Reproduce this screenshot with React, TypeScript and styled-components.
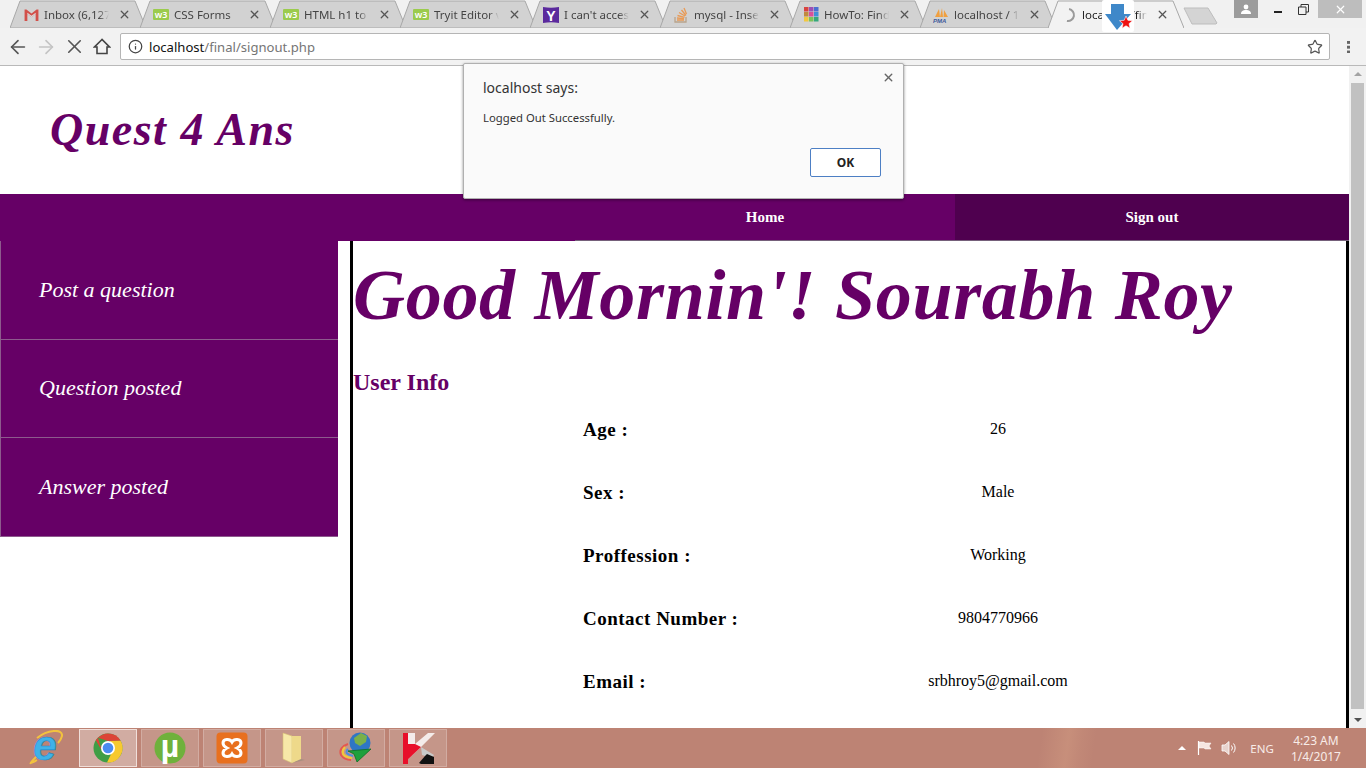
import React from 'react'
import styled, { createGlobalStyle } from 'styled-components'
import { ArrowLeft, ArrowRight, X, Info, Star } from 'lucide-react'

const UI_FONT = `'Noto Sans', 'Open Sans', sans-serif`
const PAGE_FONT = `'Liberation Serif', 'Times New Roman', serif`
const PURPLE = '#660066'

const GlobalStyle = createGlobalStyle`
  html, body {
    margin: 0;
    padding: 0;
    height: 100%;
    overflow: hidden;
    background: #fff;
  }
  * {
    box-sizing: border-box;
  }
`

const Screen = styled.div`
  width: 1366px;
  height: 768px;
  display: flex;
  flex-direction: column;
  position: relative;
  overflow: hidden;
`

/* ---------- tab strip ---------- */

const TabStrip = styled.div`
  height: 28px;
  flex: none;
  display: flex;
  align-items: flex-start;
  padding-left: 10px;
  background: #f1f1f1;
  position: relative;
`

const TabShape = styled.svg`
  position: absolute;
  inset: 0;
  width: 100%;
  height: 100%;
`

const TabItem = styled.div<{ $active?: boolean }>`
  position: relative;
  width: 136px;
  height: 28px;
  margin-right: -6px;
  margin-left: ${({ $active }) => ($active ? -2 : 0)}px;
  flex: none;
  display: flex;
  align-items: center;
  padding: 1px 15px 0 13px;
  gap: 5px;
  z-index: ${({ $active }) => ($active ? 2 : 1)};
  font: 11.5px ${UI_FONT};
  color: ${({ $active }) => ($active ? '#222' : '#444')};
`

const TabFavicon = styled.span`
  position: relative;
  width: 16px;
  height: 16px;
  flex: none;
  display: flex;
  align-items: center;
  justify-content: center;
`

const TabTitle = styled.span`
  position: relative;
  flex: 1;
  min-width: 0;
  overflow: hidden;
  white-space: nowrap;
  -webkit-mask-image: linear-gradient(to right, #000 84%, transparent 100%);
  mask-image: linear-gradient(to right, #000 84%, transparent 100%);
`

const TabClose = styled(X)`
  position: relative;
  flex: none;
  margin-left: 4px;
  color: #555;
`

const NewTab = styled.svg`
  width: 36px;
  height: 18px;
  margin: 7px 0 0 5px;
  flex: none;
  position: relative;
  z-index: 0;
`

const WindowControls = styled.div`
  margin-left: auto;
  display: flex;
  height: 18px;
  align-items: stretch;
  padding-right: 4px;
`

const ProfileButton = styled.div`
  width: 24px;
  background: #9c9c9c;
  display: flex;
  align-items: center;
  justify-content: center;
`

const ControlButton = styled.div<{ $width: number }>`
  width: ${({ $width }) => $width}px;
  display: flex;
  align-items: center;
  justify-content: center;
`

const RestoreGlyph = styled.svg`
  width: 11px;
  height: 11px;
  flex: none;
`

const CloseButton = styled.div`
  width: 44px;
  margin-left: 10px;
  background: #bdbdbd;
  display: flex;
  align-items: center;
  justify-content: center;
`

const DownloadBadge = styled.div`
  position: absolute;
  left: 1102px;
  top: 0;
  width: 32px;
  height: 32px;
  background: #fff;
  border-radius: 2px;
  z-index: 5;
`

/* ---------- toolbar ---------- */

const Toolbar = styled.div`
  height: 38px;
  flex: none;
  background: #f2f2f2;
  border-bottom: 1px solid #b9b9b9;
  display: flex;
  align-items: center;
  padding: 0 0 0 4px;
`

const NavButton = styled.div<{ $disabled?: boolean }>`
  width: 28px;
  height: 24px;
  display: flex;
  align-items: center;
  justify-content: center;
  color: ${({ $disabled }) => ($disabled ? '#c4c4c4' : '#555')};
`

const Omnibox = styled.div`
  width: 1210px;
  height: 27px;
  margin-left: 4px;
  background: #fff;
  border: 1px solid #b5b5b5;
  border-radius: 2px;
  display: flex;
  align-items: center;
  padding: 0 6px 0 7px;
  font: 13.1px ${UI_FONT};
  color: #757575;
`

const UrlHost = styled.span`
  color: #111;
`

const UrlText = styled.span`
  margin-left: 6px;
`

const BookmarkStar = styled(Star)`
  margin-left: auto;
  color: #555;
`

const MenuDots = styled.div`
  width: 3px;
  height: 13px;
  margin-left: 17px;
  background: radial-gradient(circle at center, #666 1.6px, transparent 1.8px) 0 0 / 3px 4.8px repeat-y;
`

/* ---------- page ---------- */

const Viewport = styled.div`
  flex: 1;
  min-height: 0;
  display: flex;
  overflow: hidden;
`

const Page = styled.div`
  width: 1349px;
  flex: none;
  display: flex;
  flex-direction: column;
  font-family: ${PAGE_FONT};
`

const Masthead = styled.header`
  height: 128px;
  flex: none;
  display: flex;
  align-items: center;
  padding: 0 0 2px 50px;
`

const SiteTitle = styled.h1`
  margin: 0;
  color: ${PURPLE};
  font: italic bold 46px ${PAGE_FONT};
  letter-spacing: 1.5px;
`

const NavBar = styled.nav`
  height: 47px;
  flex: none;
  display: flex;
  background: ${PURPLE};
  padding-left: 575px;
`

const NavLink = styled.div<{ $current?: boolean }>`
  width: ${({ $current }) => ($current ? 394 : 380)}px;
  display: flex;
  align-items: center;
  justify-content: center;
  color: #fff;
  font: bold 15px ${PAGE_FONT};
  background: ${({ $current }) => ($current ? '#4f004f' : PURPLE)};
  border-bottom: 1px solid #75607a;
`

const Content = styled.div`
  flex: 1;
  min-height: 0;
  display: grid;
  grid-template-columns: 338px 1fr;
  column-gap: 12px;
`

const Sidebar = styled.aside`
  display: flex;
  flex-direction: column;
`

const SideItem = styled.div`
  height: 98.5px;
  display: flex;
  align-items: center;
  padding-left: 38px;
  background: ${PURPLE};
  border-bottom: 1px solid #8d5a8d;
  border-left: 1px solid #8d5a8d;
  color: #fff;
  font: italic 22px ${PAGE_FONT};
`

const Main = styled.main`
  border-left: 3px solid #000;
  border-right: 3px solid #000;
  min-width: 0;
`

const Greeting = styled.h1`
  margin: 14px 0 0;
  color: ${PURPLE};
  font: italic bold 72px/80px ${PAGE_FONT};
  letter-spacing: 0.7px;
  white-space: nowrap;
`

const SectionTitle = styled.h2`
  margin: 32px 0 0;
  color: ${PURPLE};
  font: bold 24px/30px ${PAGE_FONT};
`

const InfoTable = styled.div`
  margin: 18px 0 0 230px;
  display: grid;
  grid-template-columns: 310px 210px;
  grid-auto-rows: 63px;
`

const InfoLabel = styled.div`
  font: bold 19px/30px ${PAGE_FONT};
  letter-spacing: 0.5px;
  color: #000;
`

const InfoValue = styled.div`
  font: 16px/28px ${PAGE_FONT};
  text-align: center;
  color: #000;
`

const Scrollbar = styled.div`
  width: 17px;
  flex: none;
  background: #f1f1f1;
  display: flex;
  flex-direction: column;
  align-items: center;
`

const ScrollArrow = styled.div<{ $down?: boolean }>`
  width: 0;
  height: 0;
  flex: none;
  margin: ${({ $down }) => ($down ? '0 0 6px' : '6px 0 0')};
  border-left: 4px solid transparent;
  border-right: 4px solid transparent;
  border-bottom: ${({ $down }) => ($down ? '0' : '4px solid #a3a3a3')};
  border-top: ${({ $down }) => ($down ? '4px solid #505050' : '0')};
`

const ScrollThumb = styled.div`
  width: 13px;
  height: 626px;
  margin-top: 7px;
  margin-bottom: auto;
  background: #c1c1c1;
`

/* ---------- alert dialog ---------- */

const Dialog = styled.div`
  position: absolute;
  left: 463px;
  top: 63px;
  width: 441px;
  height: 136px;
  background: #fafafa;
  border: 1px solid #b0b0b0;
  border-radius: 2px;
  box-shadow: 0 1px 3px rgba(0, 0, 0, 0.45);
  padding: 14px 22px 0 19px;
  font-family: ${UI_FONT};
  z-index: 6;
`

const DialogClose = styled(X)`
  position: absolute;
  top: 7px;
  right: 8px;
  color: #666;
`

const DialogTitle = styled.div`
  font-size: 14px;
  line-height: 20px;
  color: #333;
`

const DialogMessage = styled.div`
  margin-top: 12px;
  font-size: 11.3px;
  line-height: 16px;
  color: #333;
`

const DialogActions = styled.div`
  display: flex;
  justify-content: flex-end;
  margin-top: 22px;
`

const OkButton = styled.button`
  width: 71px;
  height: 29px;
  background: #fff;
  border: 1px solid #4d7fc4;
  border-radius: 2px;
  font: bold 12px ${UI_FONT};
  color: #222;
  padding: 0;
`

/* ---------- taskbar ---------- */

const Taskbar = styled.footer`
  height: 40px;
  flex: none;
  display: flex;
  align-items: center;
  background:
    linear-gradient(98deg, transparent 76%, rgba(240, 190, 150, 0.2) 78%, rgba(240, 190, 150, 0.08) 79%, transparent 80%),
    #bd8374;
  padding-left: 17px;
  font-family: ${UI_FONT};
  color: #fff;
`

const TaskButton = styled.div<{ $active?: boolean; $plain?: boolean }>`
  width: 58px;
  height: 38px;
  margin-right: 4px;
  flex: none;
  display: flex;
  align-items: center;
  justify-content: center;
  background: ${({ $active, $plain }) =>
    $plain ? 'transparent' : $active ? '#d1aca2' : '#c59689'};
  border: 1px solid ${({ $active, $plain }) =>
    $plain ? 'transparent' : $active ? '#f0dfda' : '#d2aca2'};
`

const Tray = styled.div`
  margin-left: auto;
  display: flex;
  align-items: center;
  height: 100%;
  padding-right: 25px;
`

const TrayIcons = styled.div`
  display: flex;
  align-items: center;
  gap: 8px;
  margin-right: 11px;
`

const TrayLang = styled.div`
  font-size: 11.5px;
  margin-right: 17px;
  color: #f8ece8;
`

const TrayClock = styled.div`
  font-size: 12px;
  line-height: 16px;
  padding-top: 2px;
  text-align: center;
  color: #f8ece8;
`

const TrayCaret = styled.div`
  width: 0;
  height: 0;
  margin-right: 3px;
  border-left: 4px solid transparent;
  border-right: 4px solid transparent;
  border-bottom: 4px solid #fff;
`

/* ---------- favicons and logos ---------- */

const GmailIcon = () => (
  <svg width="15" height="12" viewBox="0 0 16 13">
    <path d="M0.500 0.500h2L8 5l5.500-4.500h2V13h-3V5.500L8 9 3.500 5.500V13h-3z" fill="#d2504a" />
    <path d="M3.500 5.500L8 9l4.500-3.500V4L8 7.400 3.500 4z" fill="#ddd" />
  </svg>
)

const W3Mark = styled.span`
  width: 16px;
  height: 11px;
  background: #9bcb4c;
  color: #fff;
  font: 600 9px/11px ${UI_FONT};
  text-align: center;
  border-radius: 1px;
`

const YahooIcon = () => (
  <svg width="16" height="16" viewBox="0 0 16 16">
    <path d="M0 0q8 1.500 16 0v16q-8-1.500-16 0z" fill="#5b2a9d" />
    <text x="8" y="13.500" textAnchor="middle" fontSize="14" fontWeight="bold" fill="#fff" fontFamily="Liberation Sans">
      Y
    </text>
  </svg>
)

const StackIcon = () => (
  <svg width="14" height="16" viewBox="0 0 14 16" fill="none" stroke="#e99a55" strokeWidth="1.300">
    <path d="M1 10v5h11v-5" stroke="#b9a48c" />
    <path d="M3 13h7M3 11l7 .6M3.500 8.500l7 1.800M5 5.500l6 3.500M7.500 3l4.500 5.500M10 1l2.500 6" />
  </svg>
)

const GridIcon = () => {
  const colors = ['#d8433f', '#9b4fb5', '#4a6fd0', '#c08a3e', '#d84f9a', '#3f8fd8', '#f2c83e', '#7bc25a', '#35a87c']
  return (
    <svg width="15" height="15" viewBox="0 0 15 15">
      {colors.map((c, i) => (
        <rect key={c} x={(i % 3) * 5} y={Math.floor(i / 3) * 5} width="4.500" height="4.500" fill={c} />
      ))}
    </svg>
  )
}

const PmaIcon = () => (
  <svg width="16" height="16" viewBox="0 0 16 16">
    <path d="M2 10L6 2l1 8zM7 10l2-9 1 9zM10.500 10L11 3l4 7z" fill="#f0a040" />
    <text x="0" y="15.500" fontSize="6" fontStyle="italic" fontWeight="bold" fill="#3f5a9c" fontFamily="Liberation Sans">
      PMA
    </text>
  </svg>
)

const SpinnerSvg = styled.svg`
  margin-left: -3px;
`

const Spinner = () => (
  <SpinnerSvg width="16" height="16" viewBox="0 0 16 16" fill="none">
    <path d="M8 2a6 6 0 0 1 0 12" stroke="#9a9a9a" strokeWidth="2" transform="rotate(10 8 8)" />
  </SpinnerSvg>
)

const ChromeIcon = () => (
  <svg width="30" height="30" viewBox="0 0 30 30">
    <circle cx="15" cy="15" r="14.500" fill="#3f9e45" />
    <path d="M15 .5a14.500 14.500 0 0 1 12.600 7.300L15 8 5 4.800A14.500 14.500 0 0 1 15 .5z" fill="#dc4437" />
    <path d="M2.800 7.200L9 18 5 4.800z" fill="#dc4437" />
    <path d="M27.600 7.800A14.500 14.500 0 0 1 14 29.500L21 15l-4-7z" fill="#f7c92f" />
    <circle cx="15" cy="15" r="7" fill="#fff" />
    <circle cx="15" cy="15" r="5.300" fill="#4a8cf0" />
  </svg>
)

const IeIcon = () => (
  <svg width="34" height="36" viewBox="0 0 34 36">
    <text x="16" y="30" textAnchor="middle" fontSize="42" fontWeight="bold" fontStyle="italic" fill="#3fb2e8" stroke="#1f86c8" strokeWidth="0.600" fontFamily="Liberation Sans">
      e
    </text>
    <path d="M7 27C-2 36 1 34 8 30M8 8c10-8 26-10 25-2-.5 2-2 5-4 7" fill="none" stroke="#f2c23e" strokeWidth="2" />
  </svg>
)

const TorrentIcon = () => (
  <svg width="32" height="32" viewBox="0 0 32 32">
    <circle cx="16" cy="16" r="15.500" fill="#6fb13c" />
    <text x="16" y="25" textAnchor="middle" fontSize="32" fontWeight="bold" fill="#fff" fontFamily="Liberation Sans">
      µ
    </text>
  </svg>
)

const XamppIcon = () => (
  <svg width="32" height="32" viewBox="0 0 32 32">
    <rect x="0.500" y="0.500" width="31" height="31" rx="4" fill="#e8701f" />
    <path
      d="M16 10C14 6.500 7 6.500 7 11c0 2.500 2 4 4 5-2 1-4 2.500-4 5 0 4.500 7 4.500 9 1 2 3.500 9 3.500 9-1 0-2.500-2-4-4-5 2-1 4-2.500 4-5 0-4.500-7-4.500-9-1z"
      fill="none"
      stroke="#fff"
      strokeWidth="3"
    />
  </svg>
)

const FolderIcon = () => (
  <svg width="24" height="32" viewBox="0 0 24 32">
    <path d="M1 1l9 3v27l-9-4z" fill="#f7e8a8" stroke="#d6bf72" strokeWidth="0.600" />
    <path d="M10 4h9v24l-9 3z" fill="#eed98a" />
    <path d="M10 31l13-3-4-1z" fill="#a98f7f" />
  </svg>
)

const IdmIcon = () => (
  <svg width="34" height="32" viewBox="0 0 34 32">
    <path d="M9 12C3 14 0 18 2 23c2 3 6 5 10 5" fill="none" stroke="#e4574f" strokeWidth="2" />
    <path d="M6 15C3 18 3 22 6 24c2 1 5 2 7 2" fill="none" stroke="#f1c83a" strokeWidth="2.200" />
    <path d="M9 17c-2 2-2 4 0 5 1 1 3 1 5 2" fill="none" stroke="#4a8fe0" strokeWidth="2" />
    <circle cx="21" cy="11" r="10.500" fill="#2f76c4" />
    <path d="M15 6l7-5 6 3-1 6-6 4-5-3z" fill="#7ab04a" />
    <path d="M32 17L9 19l6 3 3 8z" fill="#1ea03c" stroke="#0d6e25" strokeWidth="0.800" />
  </svg>
)

const KasperskyIcon = () => (
  <svg width="33" height="33" viewBox="0 0 33 33">
    <path d="M1 1h12v11L26 1h7L19 15 1 32z" fill="#f4ecea" />
    <path d="M1 12l12 0 6 3L1 32z" fill="#e8102a" />
    <path d="M1 1h5v31H1z" fill="#e8102a" />
    <path d="M19 15l13 8-2 3-10-3z" fill="#c9c9c9" />
    <path d="M17 31l6-7 2-2 7 3v7H19z" fill="#111" />
  </svg>
)

const HomeGlyph = () => (
  <svg width="18" height="17" viewBox="0 0 18 17" fill="none" stroke="#444" strokeWidth="1.600">
    <path d="M9 1.500L1.500 9H4v6.500h10V9h2.500z" />
  </svg>
)

const DownloadArrow = () => (
  <svg width="32" height="32" viewBox="0 0 32 32">
    <path d="M9 4h13v10h7L15 30 3 14h6z" fill="#3f88c9" />
    <path d="M24 16l1.900 4.300 4.600.4-3.500 3 1.100 4.500-4.100-2.400-4 2.400 1-4.500-3.500-3 4.700-.4z" fill="#ee1111" stroke="#fff" strokeWidth="0.600" />
  </svg>
)

const TrayFlag = () => (
  <svg width="16" height="16" viewBox="0 0 16 16" fill="none" stroke="#fff">
    <path d="M1.500 1v14" strokeWidth="1.200" />
    <path d="M2 2h5l1 1h6l-2 3 2 3H8L7 8H2z" fill="#f6e6e1" strokeWidth="0.500" />
  </svg>
)

const TraySpeaker = () => (
  <svg width="18" height="16" viewBox="0 0 18 16" fill="none" stroke="#fff">
    <path d="M1 5h3l4-3.500v13L4 11H1z" fill="#e8d3cd" strokeWidth="0.800" />
    <path d="M10.500 5.500a4 4 0 0 1 0 5M12.500 3.500a7 7 0 0 1 0 9" strokeWidth="1" />
  </svg>
)

/* ---------- data ---------- */

const tabs: { title: string; icon: React.ReactNode; active?: boolean }[] = [
  { title: 'Inbox (6,127)', icon: <GmailIcon /> },
  { title: 'CSS Forms', icon: <W3Mark>w3</W3Mark> },
  { title: 'HTML h1 to h6', icon: <W3Mark>w3</W3Mark> },
  { title: 'Tryit Editor v3', icon: <W3Mark>w3</W3Mark> },
  { title: "I can't access", icon: <YahooIcon /> },
  { title: 'mysql - Insert', icon: <StackIcon /> },
  { title: 'HowTo: Find', icon: <GridIcon /> },
  { title: 'localhost / 127', icon: <PmaIcon /> },
  { title: 'localhost/final', icon: <Spinner />, active: true },
]

const sideItems = ['Post a question', 'Question posted', 'Answer posted']

const userInfo = [
  ['Age :', '26'],
  ['Sex :', 'Male'],
  ['Proffession :', 'Working'],
  ['Contact Number :', '9804770966'],
  ['Email :', 'srbhroy5@gmail.com'],
]

const taskIcons: { icon: React.ReactNode; active?: boolean; plain?: boolean }[] = [
  { icon: <IeIcon />, plain: true },
  { icon: <ChromeIcon />, active: true },
  { icon: <TorrentIcon /> },
  { icon: <XamppIcon /> },
  { icon: <FolderIcon /> },
  { icon: <IdmIcon /> },
  { icon: <KasperskyIcon /> },
]

export default function App() {
  return (
    <Screen>
      <GlobalStyle />
      <TabStrip>
        {tabs.map((tab) => (
          <TabItem key={tab.title} $active={tab.active}>
            <TabShape viewBox="0 0 136 28" preserveAspectRatio="none">
              <path
                d="M0 28L10 1h115l11 27z"
                fill={tab.active ? '#f2f2f2' : '#d2d2d2'}
                stroke="#a8a8a8"
              />
              {tab.active && <path d="M1 28h134" stroke="#f2f2f2" strokeWidth="2" />}
            </TabShape>
            <TabFavicon>{tab.icon}</TabFavicon>
            <TabTitle>{tab.title}</TabTitle>
            <TabClose size={13} strokeWidth={2.4} />
          </TabItem>
        ))}
        <NewTab viewBox="0 0 36 18">
          <path d="M1 1h24l9 15-1 1H9z" fill="#d4d4d4" stroke="#bdbdbd" />
        </NewTab>
        <WindowControls>
          <ProfileButton>
            <svg width="10" height="10" viewBox="0 0 10 10">
              <circle cx="5" cy="3" r="2.400" fill="#fff" />
              <path d="M0 10c0-3 2-4 5-4s5 1 5 4z" fill="#fff" />
            </svg>
          </ProfileButton>
          <ControlButton $width={40}>
            <svg width="10" height="10" viewBox="0 0 10 10">
              <path d="M1 7h8v2H1z" fill="#222" />
            </svg>
          </ControlButton>
          <ControlButton $width={10}>
            <RestoreGlyph viewBox="0 0 11 11" fill="none" stroke="#333">
              <path d="M.500 3h7.500v7.500H.500zM3 3V.500h7.500V8H8" />
            </RestoreGlyph>
          </ControlButton>
          <CloseButton>
            <X size={13} color="#fff" strokeWidth={2.2} />
          </CloseButton>
        </WindowControls>
      </TabStrip>
      <DownloadBadge>
        <DownloadArrow />
      </DownloadBadge>
      <Toolbar>
        <NavButton>
          <ArrowLeft size={22} strokeWidth={1.8} />
        </NavButton>
        <NavButton $disabled>
          <ArrowRight size={22} strokeWidth={1.8} />
        </NavButton>
        <NavButton>
          <X size={23} strokeWidth={1.7} />
        </NavButton>
        <NavButton>
          <HomeGlyph />
        </NavButton>
        <Omnibox>
          <Info size={15} color="#444" strokeWidth={2} />
          <UrlText>
            <UrlHost>localhost</UrlHost>/final/signout.php
          </UrlText>
          <BookmarkStar size={16} strokeWidth={1.8} />
        </Omnibox>
        <MenuDots />
      </Toolbar>
      <Viewport>
        <Page>
          <Masthead>
            <SiteTitle>Quest 4 Ans</SiteTitle>
          </Masthead>
          <NavBar>
            <NavLink>Home</NavLink>
            <NavLink $current>Sign out</NavLink>
          </NavBar>
          <Content>
            <Sidebar>
              {sideItems.map((item) => (
                <SideItem key={item}>{item}</SideItem>
              ))}
            </Sidebar>
            <Main>
              <Greeting>Good Mornin'! Sourabh Roy</Greeting>
              <SectionTitle>User Info</SectionTitle>
              <InfoTable>
                {userInfo.map(([label, value]) => (
                  <React.Fragment key={label}>
                    <InfoLabel>{label}</InfoLabel>
                    <InfoValue>{value}</InfoValue>
                  </React.Fragment>
                ))}
              </InfoTable>
            </Main>
          </Content>
        </Page>
        <Scrollbar>
          <ScrollArrow />
          <ScrollThumb />
          <ScrollArrow $down />
        </Scrollbar>
      </Viewport>
      <Taskbar>
        {taskIcons.map((t, i) => (
          <TaskButton key={i} $active={t.active} $plain={t.plain}>
            {t.icon}
          </TaskButton>
        ))}
        <Tray>
          <TrayIcons>
            <TrayCaret />
            <TrayFlag />
            <TraySpeaker />
          </TrayIcons>
          <TrayLang>ENG</TrayLang>
          <TrayClock>
            4:23 AM
            <br />
            1/4/2017
          </TrayClock>
        </Tray>
      </Taskbar>
      <Dialog>
        <DialogClose size={13} strokeWidth={2.6} />
        <DialogTitle>localhost says:</DialogTitle>
        <DialogMessage>Logged Out Successfully.</DialogMessage>
        <DialogActions>
          <OkButton>OK</OkButton>
        </DialogActions>
      </Dialog>
    </Screen>
  )
}
